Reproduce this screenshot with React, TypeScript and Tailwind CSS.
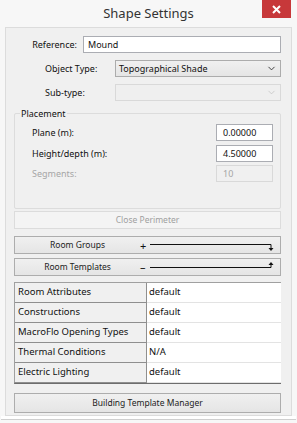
import { ChevronDown } from "lucide-react";

const font = { fontFamily: '"Noto Sans", "Open Sans", sans-serif' };

const rows = [
  ["Room Attributes", "default"],
  ["Constructions", "default"],
  ["MacroFlo Opening Types", "default"],
  ["Thermal Conditions", "N/A"],
  ["Electric Lighting", "default"],
];

function Btn({ children, disabled }: { children: React.ReactNode; disabled?: boolean }) {
  return (
    <div
      className={`h-[18px] flex items-center justify-center text-[8.5px] border ${
        disabled
          ? "border-[#dcdcdc] bg-[#f4f4f4] text-[#9f9f9f]"
          : "border-[#adadad] bg-gradient-to-b from-[#f0f0f0] to-[#e5e5e5] text-[#222]"
      }`}
    >
      {children}
    </div>
  );
}

function Expander({ label, open }: { label: string; open: boolean }) {
  return (
    <div className="h-[18px] flex items-center border border-[#adadad] bg-gradient-to-b from-[#f0f0f0] to-[#e5e5e5] text-[8.5px] text-[#222]">
      <div className="w-[125px] text-center">{label}</div>
      <div className={`w-[8px] text-[11px] leading-none text-[#111] ${open ? "" : "-mt-[2px]"}`}>{open ? "+" : "–"}</div>
      <svg width="126" height="16" viewBox="0 0 126 16" className="ml-[2px]">
        {open ? (
          <>
            <line x1="0" y1="7.5" x2="121" y2="7.5" stroke="#111" strokeWidth="1" />
            <line x1="121" y1="7.5" x2="121" y2="12" stroke="#111" strokeWidth="1" />
            <polygon points="118.5,11 123.5,11 121,14" fill="#111" />
          </>
        ) : (
          <>
            <line x1="0" y1="8.5" x2="121" y2="8.5" stroke="#111" strokeWidth="1" />
            <line x1="121" y1="8.5" x2="121" y2="5" stroke="#111" strokeWidth="1" />
            <polygon points="118.5,6 123.5,6 121,3" fill="#111" />
          </>
        )}
      </svg>
    </div>
  );
}

export default function App() {
  return (
    <div className="w-[297px] h-[423px] bg-[#f7f7f7] flex flex-col overflow-hidden select-none" style={font}>
      {/* Title bar */}
      <div className="h-[27px] relative flex items-center justify-center shrink-0">
        <span className="text-[13px] text-[#333]">Shape Settings</span>
        <div className="absolute right-[6px] top-0 w-[29px] h-[18px] bg-[#c7383a] flex items-center justify-center">
          <svg width="9" height="9" viewBox="0 0 9 9">
            <path d="M1 1 L8 8 M8 1 L1 8" stroke="#fff" strokeWidth="2" />
          </svg>
        </div>
      </div>

      {/* Body */}
      <div className="mx-[5px] h-[389px] border border-[#dcdcdc] bg-[#f0f0f0] pl-[8px] pr-[10px] pt-[8px] flex flex-col text-[9px] text-[#111]">
        <div className="flex items-center h-[17px]">
          <span className="w-[63px] text-right">Reference:</span>
          <div className="ml-[6px] flex-1 h-[17px] bg-white border border-[#abadb3] flex items-center px-[4px]">Mound</div>
        </div>

        <div className="flex items-center h-[17px] mt-[7px]">
          <span className="w-[101px] pl-[31px]">Object Type:</span>
          <div className="flex-1 h-[17px] border border-[#acacac] bg-gradient-to-b from-[#f0f0f0] to-[#e5e5e5] flex items-center px-[3px]">
            <span className="flex-1">Topographical Shade</span>
            <ChevronDown size={11} strokeWidth={2} className="text-[#333]" />
          </div>
        </div>

        <div className="flex items-center h-[17px] mt-[7px]">
          <span className="w-[101px] pl-[31px]">Sub-type:</span>
          <div className="flex-1 h-[17px] border border-[#d9d9d9] bg-[#efefef] flex items-center justify-end px-[3px]">
            <ChevronDown size={11} strokeWidth={1.5} className="text-[#bdbdbd]" />
          </div>
        </div>

        {/* Placement group */}
        <div className="relative mt-[12px] h-[96px] border border-[#dcdcdc] rounded-[2px]">
          <span className="absolute left-[5px] -top-[7px] px-[1px] bg-[#f0f0f0] leading-[13px]">Placement</span>
          <div className="flex items-center h-[17px] mt-[10px] pl-[17px] pr-[7px]">
            <span className="flex-1">Plane (m):</span>
            <div className="w-[57px] h-[17px] bg-white border border-[#abadb3] flex items-center px-[6px]">0.00000</div>
          </div>
          <div className="flex items-center h-[17px] mt-[4px] pl-[17px] pr-[7px]">
            <span className="flex-1">Height/depth (m):</span>
            <div className="w-[57px] h-[17px] bg-white border border-[#abadb3] flex items-center px-[6px]">4.50000</div>
          </div>
          <div className="flex items-center h-[17px] mt-[3px] pl-[17px] pr-[7px] text-[#a6a6a6]">
            <span className="flex-1">Segments:</span>
            <div className="w-[57px] h-[17px] bg-[#f0f0f0] border border-[#d9d9d9] flex items-center px-[6px]">10</div>
          </div>
        </div>

        <div className="mt-[2px]">
          <Btn disabled>Close Perimeter</Btn>
        </div>
        <div className="mt-[7px]">
          <Expander label="Room Groups" open />
        </div>
        <div className="mt-[4px]">
          <Expander label="Room Templates" open={false} />
        </div>

        {/* Table */}
        <div className="mt-[6px] h-[102px] border-t border-l border-[#a0a0a0] border-b-2 border-b-[#6d6d6d] flex flex-col text-[9.5px]">
          {rows.map(([k, v]) => (
            <div key={k} className="flex h-[20px] shrink-0">
              <div className="w-[132px] bg-[#f0f0f0] border-b border-r border-[#8f8f8f] px-[3px] flex items-center">{k}</div>
              <div className="flex-1 bg-white border-b border-[#e3e3e3] px-[2px] flex items-center">{v}</div>
            </div>
          ))}
          <div className="flex flex-1">
            <div className="w-[132px] border-r border-[#8f8f8f]" />
            <div className="flex-1 bg-white" />
          </div>
        </div>

        <div className="mt-[9px]">
          <div className="h-[20px] flex items-center justify-center text-[8.5px] border border-[#adadad] bg-gradient-to-b from-[#f0f0f0] to-[#e5e5e5] text-[#222]">
            Building Template Manager
          </div>
        </div>
      </div>
      <div className="mx-[1px] h-[4px] bg-white border-b border-[#cfcfcf]" />
    </div>
  );
}
